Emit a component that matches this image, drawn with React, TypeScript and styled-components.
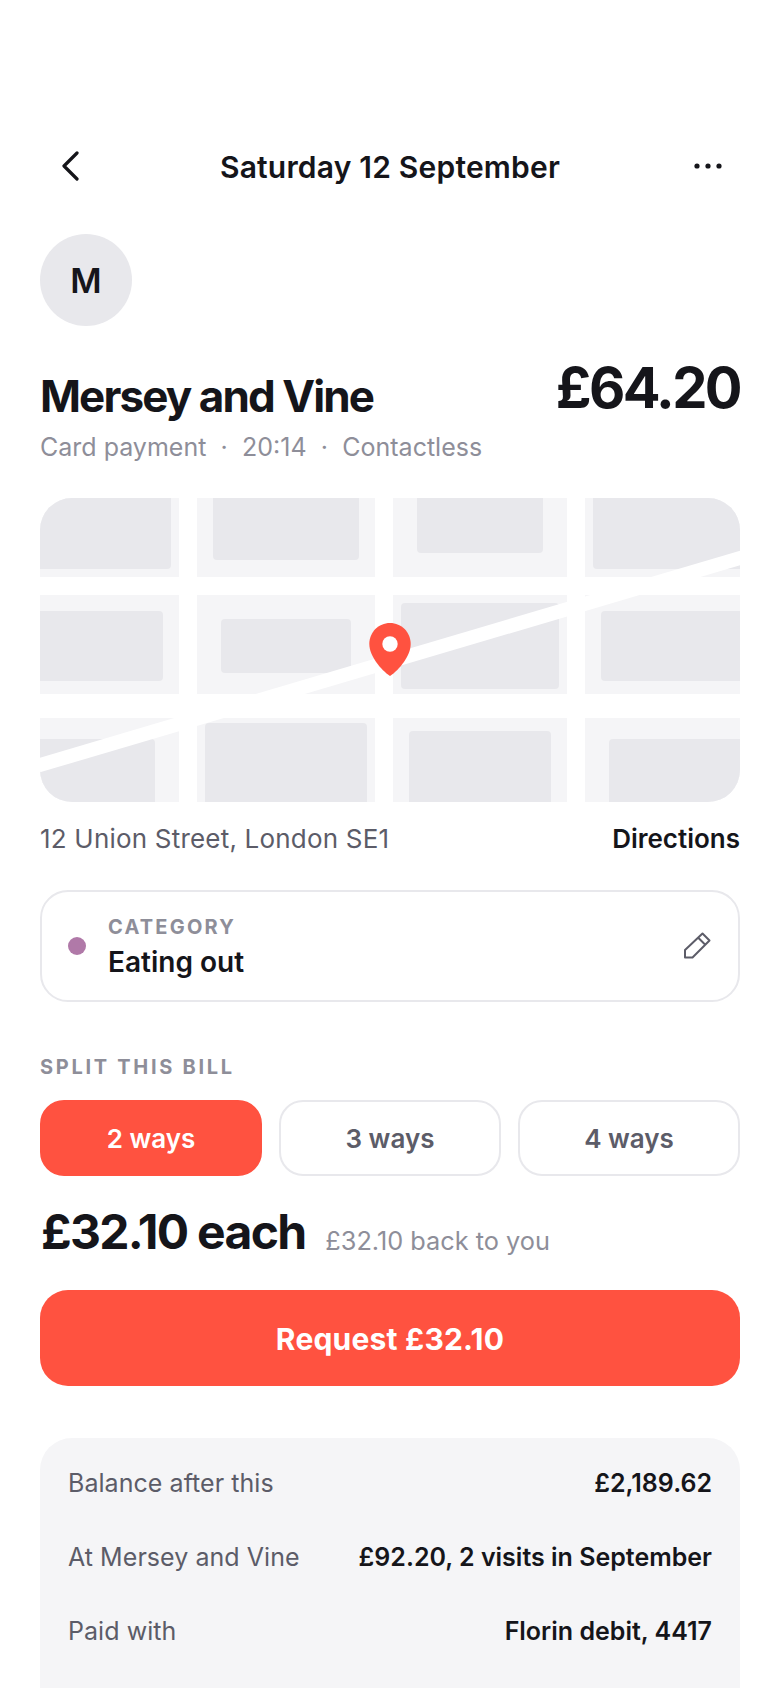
import React from "react";
import styled, { createGlobalStyle } from "styled-components";

const GlobalStyle = createGlobalStyle`
  html, body {
    margin: 0;
    padding: 0;
    background: #fff;
  }
  * {
    box-sizing: border-box;
  }
`;

const ink = "#15151a";
const mid = "#5c5c68";
const soft = "#8e8e99";
const line = "#e8e8ec";
const coral = "#ff5240";
const mist = "#f5f5f7";

const blocks = [
  [-20, -20, 151, 91],
  [173, -20, 146, 82],
  [377, -20, 126, 75],
  [553, -20, 170, 91],
  [-20, 113, 143, 70],
  [181, 121, 130, 54],
  [361, 105, 158, 86],
  [561, 113, 160, 70],
  [-20, 241, 135, 90],
  [165, 225, 162, 100],
  [369, 233, 142, 90],
  [569, 241, 150, 90],
];

const ground = [
  [0, 0, 139, 79],
  [157, 0, 178, 79],
  [353, 0, 174, 79],
  [545, 0, 155, 79],
  [0, 97, 139, 99],
  [157, 97, 178, 99],
  [353, 97, 174, 99],
  [545, 97, 155, 99],
  [0, 220, 139, 84],
  [157, 220, 178, 84],
  [353, 220, 174, 84],
  [545, 220, 155, 84],
];

const rows = [
  { label: "Balance after this", value: "£2,189.62" },
  { label: "At Mersey and Vine", value: "£92.20, 2 visits in September" },
  { label: "Paid with", value: "Florin debit, 4417" },
];

const App: React.FC = () => {
  return (
    <Page>
      <GlobalStyle />
      <Header>
        <IconButton aria-label="Back">
          <svg width="20" height="30" viewBox="0 0 20 30" fill="none">
            <path d="M16 2 L3 15 L16 28" stroke={ink} strokeWidth="3.2" strokeLinecap="round" strokeLinejoin="round" />
          </svg>
        </IconButton>
        <HeaderTitle>Saturday 12 September</HeaderTitle>
        <MoreButton aria-label="More">
          <svg width="28" height="6" viewBox="0 0 28 6" fill={ink}>
            <circle cx="3" cy="3" r="2.6" />
            <circle cx="14" cy="3" r="2.6" />
            <circle cx="25" cy="3" r="2.6" />
          </svg>
        </MoreButton>
      </Header>

      <Avatar>M</Avatar>

      <TitleRow>
        <Merchant>Mersey and Vine</Merchant>
        <Price>£64.20</Price>
      </TitleRow>
      <Meta>
        <span>Card payment</span>
        <Dot>·</Dot>
        <span>20:14</span>
        <Dot>·</Dot>
        <span>Contactless</span>
      </Meta>

      <MapBox>
        <svg width="700" height="304" viewBox="0 0 700 304">
          {ground.map(([x, y, w, h], i) => (
            <rect key={i} x={x} y={y} width={w} height={h} fill={mist} />
          ))}
          {blocks.map(([x, y, w, h], i) => (
            <rect key={i} x={x} y={y} width={w} height={h} rx="4" fill={line} />
          ))}
          <path d="M-10 270 L710 57" stroke="#fff" strokeWidth="14" />
          <path
            d="M350 125 C338.5 125 329.3 134.3 329.3 146 C329.3 158 341 172 350 178 C359 172 370.7 158 370.7 146 C370.7 134.3 361.5 125 350 125 Z"
            fill={coral}
          />
          <circle cx="350" cy="146" r="7.7" fill="#fff" />
        </svg>
      </MapBox>

      <AddressRow>
        <Address>12 Union Street, London SE1</Address>
        <Directions>Directions</Directions>
      </AddressRow>

      <CategoryCard>
        <CategoryDot />
        <CategoryText>
          <SmallCaps>Category</SmallCaps>
          <CategoryName>Eating out</CategoryName>
        </CategoryText>
        <PencilIcon width="28" height="28" viewBox="0 0 28 28" fill="none">
          <path
            d="M2 25.5 V18 L19.5 1.5 L26.5 8.5 L9.5 25.5 Z M15 5.5 L22.5 13"
            stroke={mid}
            strokeWidth="2"
            strokeLinejoin="round"
          />
        </PencilIcon>
      </CategoryCard>

      <SplitLabel>Split this bill</SplitLabel>
      <SplitRow>
        <SplitButton $active>2 ways</SplitButton>
        <SplitButton>3 ways</SplitButton>
        <SplitButton>4 ways</SplitButton>
      </SplitRow>

      <EachRow>
        <EachAmount>£32.10 each</EachAmount>
        <EachNote>£32.10 back to you</EachNote>
      </EachRow>

      <RequestButton>Request £32.10</RequestButton>

      <InfoPanel>
        {rows.map((row) => (
          <InfoRow key={row.label}>
            <InfoLabel>{row.label}</InfoLabel>
            <InfoValue>{row.value}</InfoValue>
          </InfoRow>
        ))}
      </InfoPanel>
    </Page>
  );
};

export default App;

const Page = styled.div`
  width: 780px;
  height: 1688px;
  overflow: hidden;
  background: #fff;
  padding: 130px 40px 0;
  font-family: Inter, "Liberation Sans", sans-serif;
  color: ${ink};
`;

const Header = styled.header`
  height: 72px;
  display: flex;
  align-items: center;
  justify-content: space-between;
`;

const IconButton = styled.div`
  width: 60px;
  display: flex;
  justify-content: flex-start;
  padding-left: 21px;
`;

const MoreButton = styled.div`
  width: 60px;
  display: flex;
  justify-content: flex-end;
  padding-right: 18px;
`;

const HeaderTitle = styled.div`
  font-size: 30px;
  font-weight: 600;
  letter-spacing: 0.2px;
  padding-top: 2px;
`;

const Avatar = styled.div`
  margin-top: 32px;
  width: 92px;
  height: 92px;
  border-radius: 50%;
  background: ${line};
  display: flex;
  align-items: center;
  justify-content: center;
  font-size: 34px;
  font-weight: 600;
`;

const TitleRow = styled.div`
  margin-top: 28px;
  display: flex;
  align-items: flex-end;
  justify-content: space-between;
`;

const Merchant = styled.h1`
  margin: 0;
  font-size: 44px;
  line-height: 56px;
  font-weight: 700;
  letter-spacing: -1.9px;
`;

const Price = styled.div`
  font-size: 56px;
  line-height: 68px;
  font-weight: 700;
  letter-spacing: -2.6px;
  margin-bottom: 2px;
`;

const Meta = styled.div`
  margin-top: 6px;
  font-size: 25px;
  line-height: 34px;
  color: ${soft};
  display: flex;
`;

const Dot = styled.span`
  margin: 0 14.25px;
`;

const MapBox = styled.div`
  margin-top: 34px;
  height: 304px;
  border-radius: 32px;
  overflow: hidden;
  svg {
    display: block;
  }
`;

const AddressRow = styled.div`
  margin-top: 20px;
  display: flex;
  justify-content: space-between;
  align-items: center;
  font-size: 26px;
  line-height: 34px;
`;

const Address = styled.div`
  color: ${mid};
  letter-spacing: 0.2px;
`;

const Directions = styled.div`
  font-weight: 600;
`;

const CategoryCard = styled.div`
  margin-top: 34px;
  height: 112px;
  border: 2px solid ${line};
  border-radius: 28px;
  padding: 0 26px;
  display: flex;
  align-items: center;
`;

const CategoryDot = styled.span`
  width: 18px;
  height: 18px;
  border-radius: 50%;
  background: #b079a8;
  flex: none;
`;

const CategoryText = styled.div`
  margin: 2px 0 0 22px;
  flex: 1;
`;

const SmallCaps = styled.div`
  font-size: 20px;
  line-height: 26px;
  font-weight: 700;
  letter-spacing: 2.2px;
  text-transform: uppercase;
  color: ${soft};
`;

const CategoryName = styled.div`
  margin-top: 4px;
  font-size: 28px;
  line-height: 36px;
  font-weight: 600;
`;

const PencilIcon = styled.svg`
  flex: none;
  margin-right: 1px;
`;

const SplitLabel = styled(SmallCaps)`
  margin-top: 52px;
  letter-spacing: 2.7px;
`;

const SplitRow = styled.div`
  margin-top: 20px;
  display: grid;
  grid-template-columns: repeat(3, 1fr);
  gap: 17px;
`;

const SplitButton = styled.div<{ $active?: boolean }>`
  height: 76px;
  border-radius: 24px;
  border: 2px solid ${(p) => (p.$active ? coral : line)};
  background: ${(p) => (p.$active ? coral : "#fff")};
  color: ${(p) => (p.$active ? "#fff" : mid)};
  display: flex;
  align-items: center;
  justify-content: center;
  font-size: 26px;
  font-weight: 600;
`;

const EachRow = styled.div`
  margin-top: 24px;
  display: flex;
  align-items: flex-end;
  gap: 20px;
`;

const EachAmount = styled.div`
  font-size: 48px;
  line-height: 64px;
  font-weight: 700;
  letter-spacing: -1.7px;
  padding-left: 1px;
`;

const EachNote = styled.div`
  font-size: 25.3px;
  line-height: 34px;
  padding-bottom: 6px;
  color: ${soft};
`;

const RequestButton = styled.div`
  margin-top: 26px;
  height: 96px;
  border-radius: 28px;
  background: ${coral};
  color: #fff;
  display: flex;
  align-items: center;
  justify-content: center;
  font-size: 30px;
  font-weight: 700;
  letter-spacing: 0.2px;
  padding-top: 2px;
`;

const InfoPanel = styled.section`
  margin-top: 52px;
  background: ${mist};
  border-radius: 32px;
  padding: 8px 28px 200px;
`;

const InfoRow = styled.div`
  height: 74px;
  display: flex;
  align-items: center;
  justify-content: space-between;
`;

const InfoLabel = styled.div`
  font-size: 25px;
  color: ${mid};
  letter-spacing: 0.05px;
`;

const InfoValue = styled.div`
  font-size: 25px;
  font-weight: 600;
`;
